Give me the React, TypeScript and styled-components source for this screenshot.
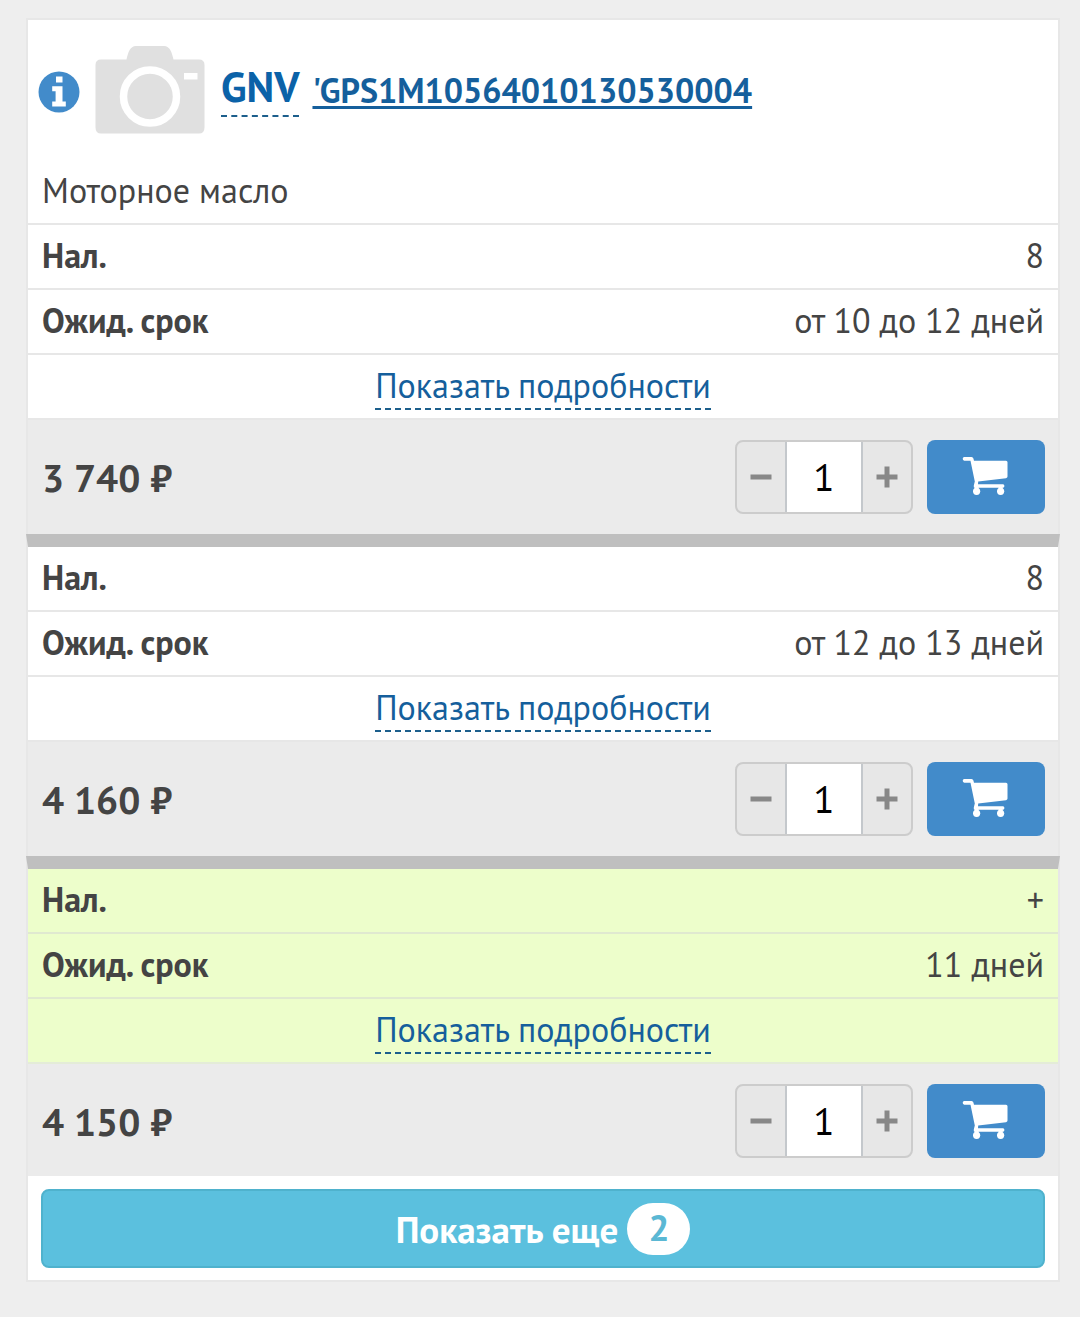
import React, { useState } from "react";
import styled, { createGlobalStyle } from "styled-components";

const GlobalStyle = createGlobalStyle`
  * {
    box-sizing: border-box;
  }
  body {
    margin: 0;
    background: #eeeeee;
    color: #444444;
    font-family: "PT Sans", "Noto Sans", "Open Sans", sans-serif;
    font-size: 34px;
    line-height: 40px;
  }
  button,
  input {
    font: inherit;
    margin: 0;
  }
`;

const Page = styled.main`
  padding: 18px 20px 36px 26px;
`;

const Card = styled.article`
  background: #ffffff;
  border: 2px solid #e7e7e7;
  border-width: 2px 0;
`;

const Framed = styled.div`
  border: 0 solid #e7e7e7;
  border-width: 0 2px;
`;

const Header = styled(Framed).attrs({ as: "header" })`
  border-bottom-width: 2px;
  padding: 24px 14px 13px 10px;
`;

const ProductLine = styled.div`
  display: flex;
  align-items: center;
  height: 92px;
`;

const InfoButton = styled.button`
  display: flex;
  padding: 4px 0 0;
  border: 0;
  background: none;
  margin-right: 14px;
`;

const CameraIcon = styled.svg`
  flex: none;
  margin-right: 16px;
`;

const Brand = styled.a`
  color: #0b62a8;
  font-size: 42px;
  font-weight: 700;
  line-height: 48px;
  padding-bottom: 4px;
  text-decoration: none;
  border-bottom: 2px dashed #1c5f8c;
  margin-right: 13px;
`;

const Article = styled.a`
  color: #155f9c;
  font-weight: 700;
  text-decoration: underline;
  text-decoration-thickness: 3px;
  text-underline-offset: 3px;
`;

const Description = styled.p`
  margin: 34px 0 0 4px;
`;

const Offer = styled(Framed).attrs({ as: "section" })<{ $divided: boolean; $local: boolean }>`
  background: ${(p) => (p.$local ? "#edfecb" : "#ffffff")};
  border-top: ${(p) => (p.$divided ? "13px solid #bfbfbf" : "0")};
`;

const Facts = styled.dl`
  margin: 0;
`;

const Fact = styled.div<{ $local: boolean }>`
  display: flex;
  justify-content: space-between;
  padding: 10px 14px 13px;
  border-bottom: 2px solid ${(p) => (p.$local ? "#e0e9d0" : "#e7e7e7")};
`;

const Term = styled.dt`
  font-weight: 700;
`;

const Value = styled.dd`
  margin: 0;
`;

const DetailsRow = styled.div<{ $local: boolean }>`
  display: flex;
  justify-content: center;
  height: 65px;
  padding-top: 10px;
  border-bottom: 2px solid ${(p) => (p.$local ? "#e4ecd8" : "#e7e7e7")};
`;

const DetailsButton = styled.button`
  height: 45px;
  padding: 0 0 3px;
  border: 0;
  border-bottom: 2px dashed #1c5f8c;
  background: none;
  color: #155f9c;
`;

const OrderRow = styled.form<{ $last: boolean }>`
  display: flex;
  align-items: center;
  justify-content: space-between;
  gap: 14px;
  padding: 20px 13px ${(p) => (p.$last ? 18 : 20)}px 14px;
  background: #ebebeb;
`;

const Price = styled.strong`
  flex: 1;
  padding-top: 2px;
  font-size: 39px;
  font-weight: 700;
`;

const Stepper = styled.div`
  display: flex;
  width: 178px;
  height: 74px;
  border: 2px solid #cccccc;
  border-radius: 8px;
  background: #e7e7e7;
  overflow: hidden;
`;

const StepButton = styled.button`
  flex: 1;
  display: flex;
  align-items: center;
  justify-content: center;
  padding: 0;
  border: 0;
  background: none;
`;

const Quantity = styled.input`
  width: 78px;
  padding: 0;
  border: 2px solid #c4c8cc;
  border-width: 0 2px;
  background: #ffffff;
  color: #000000;
  font-size: 39px;
  text-align: center;
`;

const CartButton = styled.button`
  display: flex;
  align-items: center;
  justify-content: center;
  width: 118px;
  height: 74px;
  padding: 0 3px 2px 0;
  border: 0;
  border-radius: 8px;
  background: #428bca;
`;

const Footer = styled(Framed).attrs({ as: "footer" })`
  padding: 13px 13px 12px;
`;

const MoreButton = styled.button`
  display: flex;
  align-items: center;
  justify-content: center;
  gap: 9px;
  width: 100%;
  height: 79px;
  padding: 0;
  border: 2px solid #4fb2cd;
  border-radius: 8px;
  background: #5bc0de;
  color: #ffffff;
  font-size: 37px;
  font-weight: 700;
`;

const Badge = styled.span`
  height: 52px;
  min-width: 63px;
  border-radius: 26px;
  background: #ffffff;
  color: #5bb8d4;
  line-height: 48px;
`;

type OfferData = { stock: string; term: string; price: string; local?: boolean };

const offers: OfferData[] = [
  { stock: "8", term: "от 10 до 12 дней", price: "3 740 ₽" },
  { stock: "8", term: "от 12 до 13 дней", price: "4 160 ₽" },
  { stock: "+", term: "11 дней", price: "4 150 ₽", local: true },
];

function OfferBlock({ offer, divided, last }: { offer: OfferData; divided: boolean; last: boolean }) {
  const [quantity, setQuantity] = useState(1);
  const local = Boolean(offer.local);
  return (
    <Offer $divided={divided} $local={local}>
      <Facts>
        <Fact $local={local}>
          <Term>Нал.</Term>
          <Value>{offer.stock}</Value>
        </Fact>
        <Fact $local={local}>
          <Term>Ожид. срок</Term>
          <Value>{offer.term}</Value>
        </Fact>
      </Facts>
      <DetailsRow $local={local}>
        <DetailsButton type="button">Показать подробности</DetailsButton>
      </DetailsRow>
      <OrderRow $last={last} onSubmit={(e) => e.preventDefault()}>
        <Price>{offer.price}</Price>
        <Stepper>
          <StepButton type="button" aria-label="Меньше" onClick={() => setQuantity(Math.max(1, quantity - 1))}>
            <svg width="22" height="22" viewBox="0 0 22 22" fill="#888888">
              <path d="M0.5 8.5h21v5h-21z" />
            </svg>
          </StepButton>
          <Quantity
            type="text"
            inputMode="numeric"
            aria-label="Количество"
            value={quantity}
            onChange={(e) => setQuantity(Number(e.target.value) || 1)}
          />
          <StepButton type="button" aria-label="Больше" onClick={() => setQuantity(quantity + 1)}>
            <svg width="22" height="22" viewBox="0 0 22 22" fill="#888888">
              <path d="M0.5 8.5h8v-8h5v8h8v5h-8v8h-5v-8h-8z" />
            </svg>
          </StepButton>
        </Stepper>
        <CartButton type="submit" aria-label="В корзину">
          <svg width="46" height="40" viewBox="0 0 46 40" fill="#ffffff">
            <path d="M2.3 1H9.5Q11 1 11.4 2.6L12 4.8H44Q45.5 4.8 45.5 6.3V20.6Q45.5 22 44 22.2L16.2 25.4 16 28.3H41Q42.4 28.6 42.4 30T41 31.8H13Q11.3 31.5 11.8 29.4L12.8 25.5 8.5 4.7H2.3Q.7 4.4.7 2.8T2.3 1Z" />
            <circle cx="14.6" cy="35.3" r="3.6" />
            <circle cx="38.6" cy="35.3" r="3.6" />
            <path d="M12.6 30.500h4v3h-4zM36.6 31h4v3h-4z" />
          </svg>
        </CartButton>
      </OrderRow>
    </Offer>
  );
}

export default function App() {
  return (
    <>
      <GlobalStyle />
      <Page>
        <Card>
          <Header>
            <ProductLine>
              <InfoButton type="button" aria-label="Информация">
                <svg width="43" height="42" viewBox="0 0 43 42">
                  <circle cx="21" cy="21" r="20.5" fill="#428bca" />
                  <path fill="#ffffff" d="M18 5.5h6.5v6H18zM14.2 15.2h10.3v15.3h3.3v5H14.2v-5h3.4V20.3h-3.4z" />
                </svg>
              </InfoButton>
              <CameraIcon width="110" height="90" viewBox="0 0 110 90">
                <path
                  fill="#e0e0e0"
                  d="M6 14.5H31.5C33 8 35 1 41 1H69C75 1 77 8 78.5 14.5H104Q109.5 14.5 109.5 20V82.5Q109.5 88.5 104 88.5H6Q.5 88.5.5 82.5V20Q.5 14.5 6 14.5Z"
                />
                <circle cx="55" cy="51.5" r="26.5" fill="none" stroke="#ffffff" strokeWidth="7.5" />
                <path fill="#ffffff" d="M89 28h13.5v6.5H89z" />
              </CameraIcon>
              <Brand href="#brand">GNV</Brand>
              <Article href="#article">'GPS1M10564010130530004</Article>
            </ProductLine>
            <Description>Моторное масло</Description>
          </Header>
          {offers.map((offer, index) => (
            <OfferBlock
              key={offer.price}
              offer={offer}
              divided={index > 0}
              last={index === offers.length - 1}
            />
          ))}
          <Footer>
            <MoreButton type="button">
              Показать еще <Badge>2</Badge>
            </MoreButton>
          </Footer>
        </Card>
      </Page>
    </>
  );
}
